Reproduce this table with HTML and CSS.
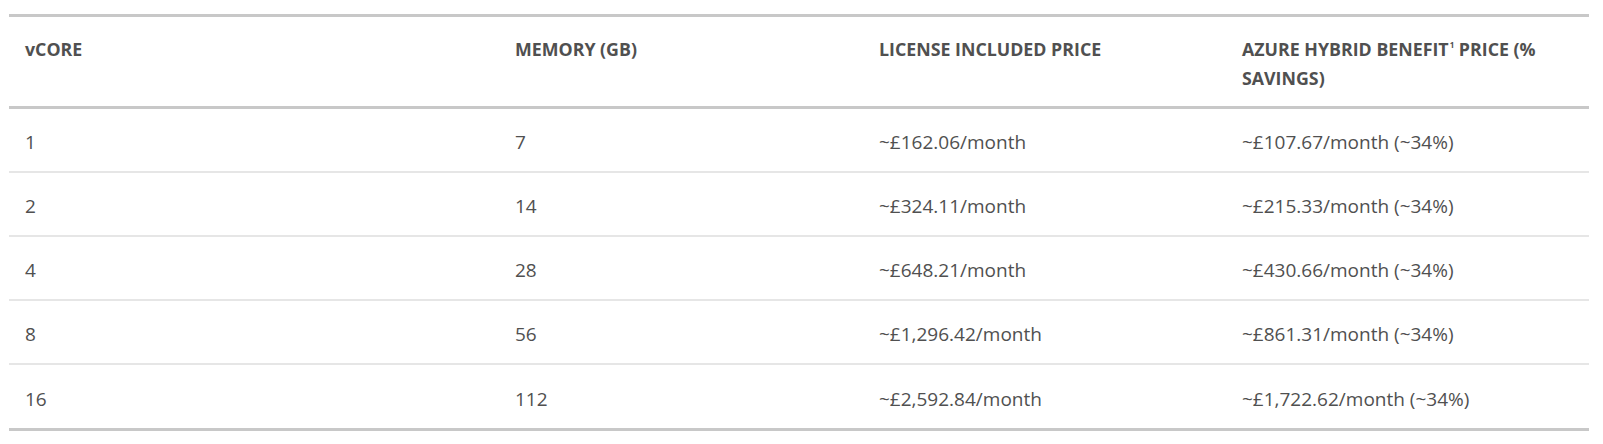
FILE: index.html
```html
<!DOCTYPE html>
<html lang="en">
<head>
<meta charset="utf-8">
<title>Pricing</title>
<link rel="stylesheet" href="styles.css">
</head>
<body>
<table class="price-table">
  <colgroup>
    <col class="c1"><col class="c2"><col class="c3"><col class="c4">
  </colgroup>
  <thead>
    <tr>
      <th>vCORE</th>
      <th>MEMORY (GB)</th>
      <th>LICENSE INCLUDED PRICE</th>
      <th>AZURE HYBRID BENEFIT<span class="fn">1</span> PRICE (% SAVINGS)</th>
    </tr>
  </thead>
  <tbody>
    <tr><td>1</td><td>7</td><td>~£162.06/month</td><td>~£107.67/month (~34%)</td></tr>
    <tr><td>2</td><td>14</td><td>~£324.11/month</td><td>~£215.33/month (~34%)</td></tr>
    <tr><td>4</td><td>28</td><td>~£648.21/month</td><td>~£430.66/month (~34%)</td></tr>
    <tr><td>8</td><td>56</td><td>~£1,296.42/month</td><td>~£861.31/month (~34%)</td></tr>
    <tr><td>16</td><td>112</td><td>~£2,592.84/month</td><td>~£1,722.62/month (~34%)</td></tr>
  </tbody>
</table>
</body>
</html>
```
FILE: styles.css
```css
html, body {
  margin: 0;
  padding: 0;
  background: #ffffff;
}
body {
  padding: 14px 0 0 9px;
  font-family: "Open Sans", "Noto Sans", sans-serif;
  color: #505050;
}
.price-table {
  width: 1580px;
  border-collapse: collapse;
  table-layout: fixed;
  border-top: 3px solid #c8c8c8;
  border-bottom: 3px solid #c8c8c8;
}
.c1 { width: 490px; }
.c2 { width: 364px; }
.c3 { width: 363px; }
.c4 { width: 363px; }
.price-table th {
  text-align: left;
  vertical-align: top;
  font-weight: 700;
  font-size: 17.8px;
  line-height: 29px;
  padding: 18px 16px 13px;
  height: 58px;
  border-bottom: 3px solid #c8c8c8;
  color: #505050;
}
.price-table th .fn {
  display: inline-block;
  font-size: 8px;
  line-height: 8px;
  vertical-align: 8px;
  margin-left: 1px;
}
.price-table td {
  font-size: 19px;
  height: 58px;
  padding: 4px 16px 0;
  vertical-align: middle;
  border-bottom: 2px solid #e6e6e6;
  color: #505050;
}
.price-table tbody tr:last-child td {
  border-bottom: none;
  height: 59px;
}
```
